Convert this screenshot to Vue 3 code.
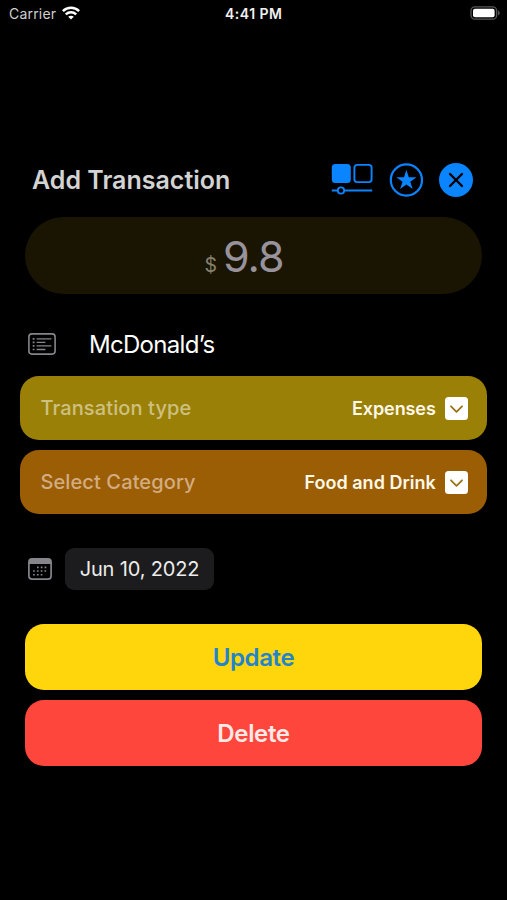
<script setup>
import { ref } from 'vue'

const fields = ref([
  { id: 'type', label: 'Transation type', value: 'Expenses' },
  { id: 'category', label: 'Select Category', value: 'Food and Drink' },
])
</script>

<template>
  <div class="screen">
    <header class="status">
      <div class="carrier">
        <span class="carrier-name">Carrier</span>
        <svg class="wifi" viewBox="0 0 18 14" width="18" height="14">
          <g fill="none" stroke="#fff" stroke-width="2.5">
            <path d="M0.9 5.2C5.4 0.7 12.6 0.7 17.1 5.2" />
            <path d="M3.8 8.4C6.8 5.6 11.2 5.6 14.2 8.4" />
          </g>
          <path d="M6.2 10.8C7.8 9.4 10.2 9.4 11.8 10.8L9 13.6Z" fill="#fff" />
        </svg>
      </div>
      <span class="clock">4:41 PM</span>
      <svg class="battery" viewBox="0 0 31 14" width="31" height="14">
        <rect x="1" y="0.8" width="25.6" height="12.4" rx="3.8" fill="#000" stroke="#58585a" stroke-width="1.3" />
        <rect x="3" y="2.7" width="21.6" height="8.6" rx="2" fill="#fff" />
        <path d="M28 4.6C30.3 5.4 30.3 8.6 28 9.4Z" fill="#58585a" />
      </svg>
    </header>

    <section class="heading">
      <h1 class="title">Add Transaction</h1>
      <div class="actions">
        <svg class="layout-icon" viewBox="0 0 42 34" width="42" height="34">
          <rect x="0.8" y="1" width="19" height="19" rx="3.5" fill="#0a84ff" />
          <rect x="23.4" y="1.9" width="17.2" height="17.2" rx="2.8" fill="none" stroke="#0a84ff" stroke-width="1.9" />
          <path d="M0.8 27.5H6.8M13.2 27.5H41.2" stroke="#0a84ff" stroke-width="2.2" />
          <circle cx="10" cy="27.5" r="3.2" fill="none" stroke="#0a84ff" stroke-width="1.8" />
        </svg>
        <svg viewBox="0 0 34 34" width="34" height="34">
          <circle cx="17.4" cy="17" r="15.6" fill="none" stroke="#0a84ff" stroke-width="2.2" />
          <path d="M17.4 6.8L19.8 14.2H27.5L21.3 18.7L23.7 26.1L17.4 21.5L11.1 26.1L13.5 18.7L7.3 14.2H15Z" fill="#0a84ff" />
        </svg>
        <svg viewBox="0 0 34 34" width="34" height="34">
          <circle cx="17" cy="17" r="17" fill="#0a84ff" />
          <path d="M11 11L23 23M23 11L11 23" stroke="#000" stroke-width="2.4" stroke-linecap="round" />
        </svg>
      </div>
    </section>

    <div class="amount">
      <span class="currency">$</span>
      <span class="number">9.8</span>
    </div>

    <div class="merchant">
      <svg viewBox="0 0 28 22" width="28" height="22">
        <rect x="0.9" y="0.9" width="26.2" height="20.2" rx="3" fill="none" stroke="#85858a" stroke-width="1.6" />
        <path d="M8.6 5.8H23.4M8.6 9.3H17.4M8.6 12.8H23.4M8.6 16.5H17.4" stroke="#85858a" stroke-width="1.3" />
        <path d="M4.7 5.8H6.5M4.7 9.3H6.5M4.7 12.8H6.5M4.7 16.5H6.5" stroke="#85858a" stroke-width="1.7" />
      </svg>
      <span class="merchant-name">McDonald’s</span>
    </div>

    <div class="fields">
      <div v-for="field in fields" :key="field.id" class="field" :class="field.id">
        <span class="label">{{ field.label }}</span>
        <span class="value">{{ field.value }}</span>
        <svg class="toggle" viewBox="0 0 23 23" width="23" height="23">
          <rect width="23" height="23" rx="3.5" fill="#fff" />
          <path class="chevron" d="M6 9.3L11.5 14.8L17 9.3" />
        </svg>
      </div>
    </div>

    <div class="date-row">
      <svg viewBox="0 0 24 22" width="24" height="22">
        <rect x="0.9" y="0.9" width="22.2" height="20.2" rx="3.2" fill="none" stroke="#85858a" stroke-width="1.7" />
        <path d="M1 6V4Q1 1 4 1H20Q23 1 23 4V6Z" fill="#85858a" />
        <path d="M9 9.4H20M5.1 13H20M5.1 16.7H16" stroke="#85858a" stroke-width="1.6" stroke-dasharray="1.7 2.1" />
      </svg>
      <span class="date">Jun 10, 2022</span>
    </div>

    <div class="buttons">
      <button class="btn update" type="button"><span>Update</span></button>
      <button class="btn delete" type="button"><span>Delete</span></button>
    </div>
  </div>
</template>

<style>
body {
  margin: 0;
  background: #000;
}
</style>

<style scoped>
.screen {
  box-sizing: border-box;
  width: 507px;
  height: 900px;
  background: #000;
  color: #fff;
  font-family: Inter, 'Liberation Sans', sans-serif;
  display: flex;
  flex-direction: column;
  overflow: hidden;
}

svg {
  display: block;
  flex: none;
}

.status {
  height: 28px;
  padding: 0 6px 0 9px;
  display: grid;
  grid-template-columns: 1fr auto 1fr;
  align-items: center;
  line-height: 28px;
}

.carrier {
  display: flex;
  align-items: center;
  gap: 6px;
}

.carrier-name {
  font-size: 14px;
  color: #d0d0d0;
  letter-spacing: 0.2px;
}

.wifi {
  margin-top: -2px;
}

.clock {
  font-size: 14px;
  font-weight: 600;
  letter-spacing: 0.5px;
  margin-right: 2.5px;
  color: #f0f0f0;
}

.battery {
  justify-self: end;
  margin-top: -2px;
}

.heading {
  height: 40px;
  margin-top: 132px;
  padding: 0 34px 0 32px;
  display: flex;
  align-items: center;
  justify-content: space-between;
}

.title {
  margin: 0;
  font-size: 25px;
  font-weight: 600;
  color: #d3d3d3;
  white-space: nowrap;
}

.actions {
  display: flex;
  gap: 16px;
  align-items: center;
}

.amount {
  height: 77px;
  margin: 17px 25px 0;
  border-radius: 38.5px;
  background: #1a1503;
  display: flex;
  align-items: baseline;
  justify-content: center;
  gap: 6px;
  line-height: 78px;
  box-sizing: border-box;
  padding-right: 19px;
}

.currency {
  font-size: 19.5px;
  color: #85806d;
}

.number {
  font-size: 43px;
  letter-spacing: -1px;
  color: #98929a;
}

.merchant {
  height: 40px;
  margin-top: 30px;
  padding-left: 28px;
  display: flex;
  align-items: center;
  gap: 33px;
}

.merchant-name {
  font-size: 24px;
  letter-spacing: -0.7px;
}

.fields {
  margin: 12px 20px 0;
  display: flex;
  flex-direction: column;
  gap: 10px;
}

.field {
  height: 64px;
  box-sizing: border-box;
  border-radius: 19px;
  padding: 0 19px 0 20.4px;
  display: flex;
  align-items: center;
  white-space: nowrap;
}

.type {
  background: #9a8007;
}

.category {
  background: #9b5e05;
}

.label {
  flex: 1;
  font-size: 20px;
  font-weight: 500;
  letter-spacing: 0.12px;
}

.type .label {
  color: #cec080;
}

.category .label {
  color: #d3ac81;
}

.value {
  font-size: 18px;
  font-weight: 600;
  color: #fff8e8;
  margin-right: 9.3px;
}

.type .value {
  letter-spacing: -0.1px;
}

.chevron {
  fill: none;
  stroke: #9a7315;
  stroke-width: 1.8;
  stroke-linecap: round;
  stroke-linejoin: round;
}

.date-row {
  height: 42px;
  margin-top: 34px;
  padding-left: 28px;
  display: flex;
  align-items: center;
  gap: 13px;
}

.date {
  width: 149px;
  height: 42px;
  line-height: 42px;
  border-radius: 9px;
  background: #1c1c1e;
  color: #ececec;
  font-size: 20px;
  letter-spacing: -0.15px;
  text-align: center;
  white-space: nowrap;
}

.buttons {
  margin: 34px 25px 0;
  display: flex;
  flex-direction: column;
  gap: 10px;
}

.btn {
  height: 66px;
  padding: 0;
  border: 0;
  border-radius: 19px;
  font-family: inherit;
  font-size: 24px;
  font-weight: 600;
  letter-spacing: -0.35px;
}

.update {
  background: #ffd50b;
  color: #2184cc;
}

.delete {
  background: #ff463d;
  color: #ffe9e7;
}
</style>
